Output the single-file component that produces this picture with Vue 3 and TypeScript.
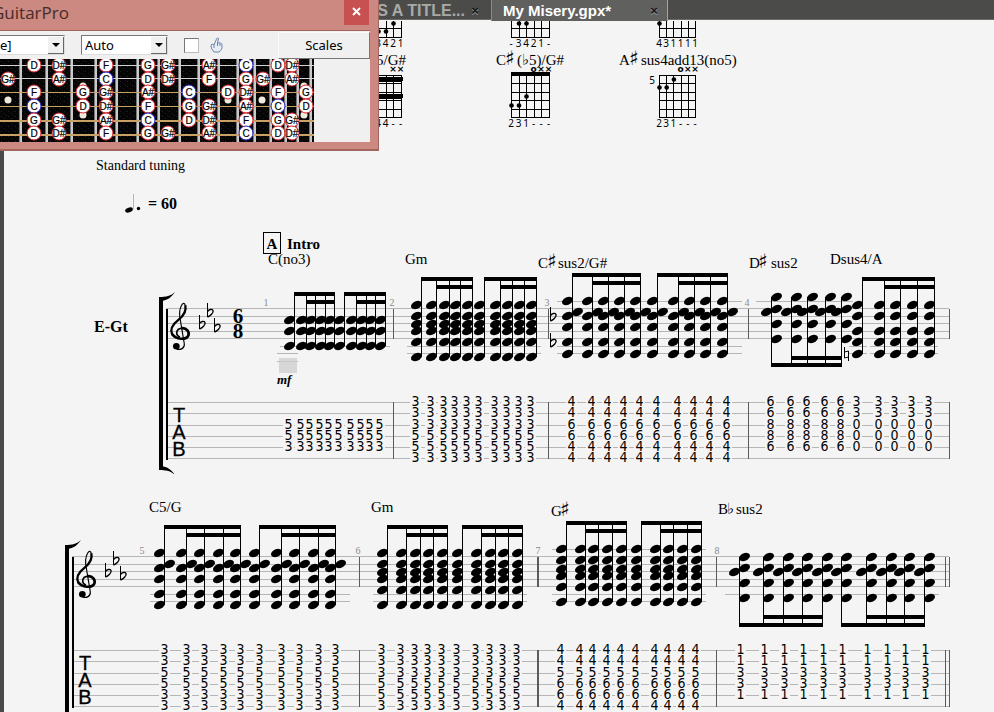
<script setup lang="ts">
import { ref } from 'vue'

type Head = [dx: number, y: number]

interface Run {
  stems: number[]
  down?: boolean
  beam: number
  beam2: number
  heads: Head[]
  frets: string
  fretDx: number
}

interface Ledger { y: number; from: number; to: number }
interface Label { x: number; y: number; root: string; sign?: string; restX?: number; rest?: string }
interface Accidental { x: number; y: number }

interface System {
  left: number
  first: boolean
  bars: { x: number; w: number }[]
  numbers: { x: number; n: number }[]
  labels: Label[]
  runs: Run[]
  ledgers: Ledger[]
  flats: Accidental[]
  naturals: Accidental[]
}

const staffYs = [308, 316, 323, 331, 338]
const tabYs = [402, 413, 425, 436, 447, 458]

const up = (ys: number[], shifted?: number): Head[] => {
  const heads = ys.map((y): Head => [-5, y])
  if (shifted !== undefined) heads.push([5, shifted])
  return heads
}
const down = (ys: number[], shifted: number): Head[] => [
  ...ys.map((y): Head => [5, y]),
  [-5, shifted],
]

function pair(
  first: number[], second: number[], beam: number, beam2: number,
  heads: Head[], frets: string, fretDx: number, isDown = false,
): Run[] {
  return [first, second].map(stems => ({ stems, beam, beam2, heads, frets, fretDx, down: isDown }))
}

const systems: System[] = [
  {
    left: 166,
    first: true,
    bars: [{ x: 393, w: 1 }, { x: 548, w: 1 }, { x: 748, w: 1 }, { x: 949, w: 1 }],
    numbers: [{ x: 266, n: 1 }, { x: 392, n: 2 }, { x: 547, n: 3 }, { x: 747, n: 4 }],
    labels: [
      { x: 268, y: 264, root: 'C(no3)' },
      { x: 405, y: 264, root: 'Gm' },
      { x: 538, y: 268, root: 'C', sign: '♯', restX: 558, rest: 'sus2/G#' },
      { x: 749, y: 268, root: 'D', sign: '♯', restX: 771, rest: 'sus2' },
      { x: 830, y: 264, root: 'Dsus4/A' },
    ],
    runs: [
      ...pair([294, 306, 315, 325, 334], [344, 356, 366, 375, 385], 292, 300,
        up([320, 331, 346]), '--553-', -6),
      ...pair([421, 436, 449, 460, 472], [484, 500, 512, 524, 536], 277, 285,
        up([305, 316, 324, 331, 342, 357]), '333553', -6),
      ...pair([572, 592, 608, 624, 640], [657, 678, 694, 710, 727], 273, 281,
        up([301, 316, 327, 342, 354], 312), '446644', -1),
      {
        stems: [771, 791, 807, 825, 841], down: true, beam: 363, beam2: 356,
        heads: down([297, 309, 324, 339], 312), frets: '66886-', fretDx: -1,
      },
      {
        stems: [862, 884, 900, 917, 934], beam: 277, beam2: 285,
        heads: up([305, 316, 331, 342, 354]), frets: '33000-', fretDx: -6,
      },
    ],
    ledgers: [
      { y: 346, from: 280, to: 390 },
      { y: 353, from: 277, to: 298 },
      { y: 361, from: 277, to: 298 },
      { y: 346, from: 407, to: 541 },
      { y: 353, from: 407, to: 541 },
      { y: 301, from: 557, to: 742 },
      { y: 346, from: 557, to: 742 },
      { y: 353, from: 557, to: 742 },
      { y: 301, from: 756, to: 853 },
      { y: 346, from: 849, to: 867 },
      { y: 353, from: 849, to: 867 },
      { y: 346, from: 870, to: 938 },
      { y: 353, from: 870, to: 938 },
    ],
    flats: [{ x: 550, y: 317 }, { x: 550, y: 343 }],
    naturals: [{ x: 847, y: 354 }],
  },
  {
    left: 72,
    first: false,
    bars: [{ x: 359, w: 1 }, { x: 537, w: 2 }, { x: 716, w: 1 }, { x: 945, w: 1 }, { x: 949, w: 1 }],
    numbers: [{ x: 142, n: 5 }, { x: 358, n: 6 }, { x: 538, n: 7 }, { x: 717, n: 8 }],
    labels: [
      { x: 149, y: 264, root: 'C5/G' },
      { x: 371, y: 264, root: 'Gm' },
      { x: 551, y: 268, root: 'G', sign: '♯' },
      { x: 718, y: 266, root: 'B', sign: '♭', restX: 736, rest: 'sus2' },
    ],
    runs: [
      ...pair([164, 186, 204, 223, 240], [259, 281, 299, 318, 335], 277, 285,
        up([305, 320, 331, 346, 357], 316), '335533', 0),
      ...pair([387, 406, 420, 433, 447], [462, 481, 495, 508, 522], 277, 285,
        up([305, 316, 324, 331, 342, 357]), '333553', -6),
      ...pair([566, 585, 598, 612, 626], [641, 660, 673, 687, 701], 273, 281,
        up([301, 312, 321, 328, 339, 354]), '445664', -6),
      ...pair([739, 763, 783, 802, 822], [841, 866, 886, 904, 924], 375, 367,
        down([309, 320, 335, 350], 324), '11331-', 1, true),
    ],
    ledgers: [
      { y: 346, from: 150, to: 350 },
      { y: 353, from: 150, to: 350 },
      { y: 346, from: 373, to: 527 },
      { y: 353, from: 373, to: 527 },
      { y: 301, from: 552, to: 706 },
      { y: 346, from: 552, to: 706 },
      { y: 353, from: 552, to: 706 },
      { y: 346, from: 725, to: 939 },
    ],
    flats: [],
    naturals: [],
  },
]

const keyFlats: Accidental[] = [{ x: 41, y: 313 }, { x: 33, y: 325 }, { x: 48, y: 328 }]

const stemTop = (r: Run) => (r.down ? Math.min(...r.heads.map(h => h[1])) : r.beam)
const stemEnd = (r: Run) => (r.down ? r.beam + 2 : Math.max(...r.heads.map(h => h[1])))

const fretCells = (r: Run) =>
  r.stems.flatMap(x =>
    r.frets.split('').map((f, row) => ({ x: x + r.fretDx, y: tabYs[row] ?? 0, f })).filter(c => c.f !== '-'))

interface Diagram {
  x: number
  step: number
  top: number
  rows: number
  nut?: boolean
  fingers: string
  marks?: string
  dots: [number, number][]
  barres?: number[]
  fret?: string
}

const diagrams: Diagram[] = [
  { x: 363, step: 7.5, top: 20, rows: 2, fingers: '  3421', dots: [[3, 31], [4, 23], [2, 31]] },
  { x: 511, step: 7.5, top: 20, rows: 2, fingers: '-3421-', dots: [[1, 23], [2, 23]] },
  { x: 659, step: 7.2, top: 20, rows: 2, fingers: '431111', dots: [[0, 23]] },
  { x: 363, step: 7.5, top: 75, rows: 5, fingers: '  44--', marks: '    ××', dots: [], barres: [79, 96] },
  { x: 511, step: 7.5, top: 75, rows: 5, nut: true, fingers: '231---', marks: '   o××', dots: [[0, 105], [1, 105], [2, 96]] },
  { x: 659, step: 7.2, top: 75, rows: 5, fingers: '231---', marks: '   o××', dots: [[2, 79], [0, 87], [1, 87]], fret: '5' },
]

const strings = [0, 1, 2, 3, 4, 5]
const rowY = (d: Diagram, i: number) => Math.round(d.top + i * 8.4)
const cells = (s: string) => s.split('').map((c, i) => ({ c, i })).filter(o => o.c !== ' ')

const fretXs = [20, 46, 71, 95, 116, 137, 158, 179, 198, 218, 237, 254, 270, 285, 297, 310]
const stringYs = [65, 78, 92, 106, 120, 134]
const noteYs = [65, 79, 92, 106, 120, 133]
const inlays: [number, number][] = [[8, 100], [83, 86], [83, 115], [228, 100], [262, 100], [304, 86], [304, 115]]
const columns: [number, string[]][] = [
  [8, ['', 'G#', '', '', '', '']],
  [34, ['D', '', 'F', 'C', 'G', 'D']],
  [59, ['D#', 'A#', '', '', 'G#', 'D#']],
  [83, ['', '', 'G', 'D', '', '']],
  [106, ['F', 'C', 'G#', 'D#', 'A#', 'F']],
  [148, ['G', 'D', 'A#', 'F', 'C', 'G']],
  [168, ['G#', 'D#', '', '', '', 'G#']],
  [189, ['', '', 'C', 'G', 'D', '']],
  [209, ['A#', 'F', '', 'G#', 'D#', 'A#']],
  [228, ['', '', 'D', '', '', '']],
  [246, ['C', 'G', 'D#', 'A#', 'F', 'C']],
  [263, ['', 'G#', '', '', '', '']],
  [278, ['D', '', 'F', 'C', 'G', 'D']],
  [292, ['D#', 'A#', '', '', 'G#', 'D#']],
  [306, ['', '', 'G', 'D', '', '']],
]
const boardNotes = columns.flatMap(([x, names]) =>
  names.map((name, row) => ({ x, y: noteYs[row] ?? 0, name })).filter(n => n.name))

const scale = ref('e]')
const mode = ref('Auto')
const follow = ref(false)
</script>

<template>
  <div class="app">
    <nav class="tabs">
      <div class="tab">
        <a href="#title" class="tab-name">S A TITLE...</a>
        <button class="tab-close" aria-label="Close tab">×</button>
      </div>
      <div class="tab active">
        <a href="#misery" class="tab-name">My Misery.gpx*</a>
        <button class="tab-close" aria-label="Close tab">×</button>
      </div>
    </nav>

    <main class="sheet">
      <svg class="strip" width="990" height="132" viewBox="4 21 990 132">
        <g v-for="(d, di) in diagrams" :key="di">
          <rect v-for="s in strings" :key="s" class="ink" :x="Math.round(d.x + s * d.step)" :y="d.top" width="1" :height="rowY(d, d.rows) - d.top" />
          <rect v-for="r in d.rows + 1" :key="r" class="ink" :x="d.x" :y="rowY(d, r - 1)" :width="Math.round(d.step * 5) + 1" height="1" />
          <rect v-if="d.nut" class="ink" :x="d.x" y="72" :width="Math.round(d.step * 5) + 1" height="4" />
          <rect v-for="b in d.barres ?? []" :key="b" class="ink" :x="d.x" :y="b - 2" width="40" height="5" rx="2" />
          <circle v-for="(p, i) in d.dots" :key="i" :cx="d.x + p[0] * d.step + 0.5" :cy="p[1] + 0.5" r="2.3" />
          <text v-for="o in cells(d.fingers)" :key="'f' + o.i" class="finger" :x="d.x + o.i * d.step" :y="rowY(d, d.rows) + 10">{{ o.c }}</text>
          <text v-for="o in cells(d.marks ?? '')" :key="'m' + o.i" class="mark" :x="d.x + o.i * d.step" y="72">{{ o.c }}</text>
          <text v-if="d.fret" class="finger" x="652" y="84">{{ d.fret }}</text>
        </g>
        <text class="chord" x="376" y="65">5/G#</text>
        <text class="chord" x="496" y="65">C</text>
        <text class="sign sharp" x="505" y="65">♯</text>
        <text class="chord" x="517" y="65">(<tspan class="sign">♭</tspan>5)/G#</text>
        <text class="chord" x="619" y="65">A</text>
        <text class="sign sharp" x="629" y="65">♯</text>
        <text class="chord" x="641" y="65">sus4add13(no5)</text>
      </svg>

      <div class="meta">
        <div class="tuning">Standard tuning</div>
        <div class="tempo">
          <svg width="18" height="22" viewBox="0 0 18 22">
            <rect x="8" y="1" width="1" height="15" fill="#b5b5b5" />
            <ellipse cx="4" cy="17" rx="4" ry="2.400" transform="rotate(-18 4 17)" />
            <circle cx="13.500" cy="15.500" r="1.700" />
          </svg>
          <span>= 60</span>
        </div>
      </div>

      <svg v-for="(s, si) in systems" :key="si" class="system" width="990" height="248" viewBox="4 226 990 248">
        <rect v-for="y in staffYs" :key="'s' + y" class="line" :x="s.left" :y="y" :width="949 - s.left" height="1" />
        <rect v-for="y in tabYs" :key="'t' + y" class="line" :x="s.left" :y="y" :width="949 - s.left" height="1" />
        <rect v-for="(l, i) in s.ledgers" :key="'l' + i" class="line" :x="l.from" :y="l.y" :width="l.to - l.from" height="1" />
        <g v-for="b in s.bars" :key="'b' + b.x" class="bar">
          <rect :x="b.x" y="309" :width="b.w" height="30" />
          <rect :x="b.x" y="402" :width="b.w" height="57" />
        </g>

        <g :transform="`translate(${s.left} 0)`">
          <rect class="ink" x="-7" y="297" width="4" height="173" />
          <path d="M-7 297 C0 297 5 296 9 292 C5 298 1 300 -4 301 Z M-7 470 C0 470 5 471 9 475 C5 469 1 467 -4 466 Z" />
          <rect class="ink" x="0" y="309" width="2" height="151" />
          <g class="clef" transform="translate(4 302) scale(0.333)">
            <path d="M30 105 C15 100 18 80 34 79" stroke-width="5" />
            <path d="M33 79 C51 76 59 91 55 101 C49 114 18 114 7 97" stroke-width="8" />
            <path d="M7 99 C-2 82 8 67 26 53 C40 42 50 28 46 10" stroke-width="7" />
            <path d="M46 11 C44 1 38 3 34 11 C27 24 27 34 31 54 L43 126 C44 140 32 144 20 142" stroke-width="3.500" />
            <circle cx="19" cy="133" r="10" />
          </g>
          <g v-for="a in keyFlats" :key="a.x" class="accidental" :transform="`translate(${a.x} ${a.y})`">
            <path d="M0.500 -10 V4" />
            <path d="M0.500 4 C3 3 7 0 6 -2.500 C5 -4.500 2 -3.500 0.500 -1.500" stroke-width="1.400" />
          </g>
          <text class="tab-letter" x="13" y="422">T</text>
          <text class="tab-letter" x="13" y="439">A</text>
          <text class="tab-letter" x="13" y="456">B</text>
        </g>

        <g v-if="s.first">
          <text class="part" x="94" y="332">E-Gt</text>
          <text class="meter" x="238" y="323">6</text>
          <text class="meter" x="238" y="338">8</text>
          <rect class="section" x="263.500" y="232.500" width="17" height="21" />
          <text class="heading middle" x="272" y="249">A</text>
          <text class="heading" x="287" y="249">Intro</text>
          <rect class="cursor" x="279" y="358" width="18" height="15" />
          <text class="dynamic" x="277" y="384">mf</text>
        </g>

        <text v-for="m in s.numbers" :key="'n' + m.n" class="number" :x="m.x" y="306">{{ m.n }}</text>

        <g v-for="(l, i) in s.labels" :key="'c' + i">
          <text class="chord" :x="l.x" :y="l.y">{{ l.root }}</text>
          <text v-if="l.sign" :class="['sign', { sharp: l.sign === '♯' }]" :x="l.x + 9" :y="l.y">{{ l.sign }}</text>
          <text v-if="l.rest" class="chord" :x="l.restX" :y="l.y">{{ l.rest }}</text>
        </g>

        <g v-for="(r, ri) in s.runs" :key="'r' + ri">
          <rect class="ink" :x="r.stems[0]" :y="r.beam" :width="r.stems[4] - r.stems[0] + 1" height="4" />
          <rect class="ink" :x="r.stems[1]" :y="r.beam2" :width="r.stems[4] - r.stems[1] + 1" height="4" />
          <g v-for="x in r.stems" :key="x">
            <rect class="ink" :x="x" :y="stemTop(r)" width="1" :height="stemEnd(r) - stemTop(r)" />
            <ellipse
              v-for="(h, hi) in r.heads" :key="hi" rx="5.800" ry="3.700"
              :transform="`translate(${x + h[0] + 0.5} ${h[1]}) rotate(-24)`"
            />
          </g>
          <g v-for="(c, ci) in fretCells(r)" :key="'d' + ci">
            <rect class="gap" :x="c.x - 5" :y="c.y - 1" width="11" height="3" />
            <text class="digit" :x="c.x + 0.5" :y="c.y + 4">{{ c.f }}</text>
          </g>
        </g>

        <g v-for="(a, i) in s.flats" :key="'f' + i" class="accidental" :transform="`translate(${a.x} ${a.y})`">
          <path d="M0.500 -10 V4" />
          <path d="M0.500 4 C3 3 7 0 6 -2.500 C5 -4.500 2 -3.500 0.500 -1.500" stroke-width="1.400" />
        </g>
        <g v-for="(a, i) in s.naturals" :key="'a' + i" class="accidental" :transform="`translate(${a.x} ${a.y})`">
          <path d="M-2.500 -7 V4 L1.500 3 M1.500 7 V-3 L-2.500 -2" />
        </g>
      </svg>
    </main>

    <section class="window">
      <header class="titlebar">
        <h1 class="window-title">GuitarPro</h1>
        <button class="window-close" aria-label="Close">
          <svg width="10" height="10" viewBox="0 0 10 10"><path d="M1 1 L8 8 M8 1 L1 8" /></svg>
        </button>
      </header>
      <div class="client">
        <div class="toolbar">
          <div class="combo root">
            <select v-model="scale" aria-label="Scale"><option>e]</option></select>
            <span class="arrow"></span>
          </div>
          <div class="combo mode">
            <select v-model="mode" aria-label="Mode"><option>Auto</option></select>
            <span class="arrow"></span>
          </div>
          <input v-model="follow" class="check" type="checkbox" aria-label="Follow">
          <svg class="hand" width="13" height="16" viewBox="0 0 13 16">
            <path d="M4 8 L6.500 2 Q7.500 0 8.500 1.500 L7.500 6 L10.500 6 Q12 6.500 12 8 V11 Q11 14 9 15 H4 Q1 12 1 9 Q1 7 3 7 Z M7.500 6 V9 M10 6.500 V9 M4 8 V11" />
          </svg>
          <button class="scales">Scales</button>
        </div>
        <svg class="board" width="314" height="83" viewBox="0 59 314 83">
          <defs>
            <pattern id="grain" width="7" height="5" patternUnits="userSpaceOnUse">
              <rect width="7" height="5" fill="#050505" />
              <rect x="1" y="1" width="1" height="1" fill="#232323" />
              <rect x="4" y="3" width="1" height="1" fill="#1d1d1d" />
              <rect x="6" y="0" width="1" height="1" fill="#191919" />
            </pattern>
          </defs>
          <rect x="0" y="59" width="314" height="83" fill="url(#grain)" />
          <g v-for="x in fretXs" :key="x">
            <rect :x="x - 1" y="59" width="1" height="83" fill="#777" />
            <rect :x="x" y="59" width="2" height="83" fill="#c9c9c9" />
          </g>
          <rect v-for="(y, i) in stringYs" :key="y" x="0" :y="y" width="314" :height="i > 3 ? 2 : 1" :fill="i < 2 ? '#d4d4d4' : '#c8a264'" />
          <circle v-for="(p, i) in inlays" :key="i" :cx="p[0]" :cy="p[1]" r="3.500" fill="#efeadd" />
          <g v-for="(n, i) in boardNotes" :key="'n' + i">
            <circle :class="['fret-note', { tonic: n.name === 'C' }]" :cx="n.x" :cy="n.y" r="7" />
            <text class="fret-name" :x="n.x" :y="n.y + 4">{{ n.name }}</text>
          </g>
        </svg>
      </div>
    </section>
  </div>
</template>

<style>
body {
  margin: 0;
  background: #f4f4f4;
}
</style>

<style scoped>
.app {
  position: relative;
  display: flex;
  flex-direction: column;
  height: 100vh;
  overflow: hidden;
  background: #f4f4f4;
  font-family: "Liberation Sans", Arial, sans-serif;
}

.tabs {
  display: flex;
  flex: none;
  height: 21px;
  background: linear-gradient(#4b4c4a 19px, #6b6c6a 19px, #6b6c6a 20px, #f4f4f4 20px);
}

.tab {
  box-sizing: border-box;
  display: flex;
  align-items: center;
  justify-content: space-between;
  width: 177px;
  padding: 0 7px 0 11px;
}

.tab:first-child {
  width: 491px;
  justify-content: flex-end;
  gap: 4px;
  padding-right: 10px;
}

.tab.active {
  border-left: 1px solid #8b8c8a;
  border-right: 1px solid #a5a6a4;
  background: #60615f;
}

.tab-name {
  color: #a9aaa8;
  font-size: 16px;
  font-weight: bold;
  line-height: 20px;
  text-decoration: none;
}

.active .tab-name {
  color: #fff;
  font-size: 15px;
}

.tab-close {
  width: 12px;
  padding: 0;
  border: 0;
  background: none;
  color: #161616;
  font: bold 13px/18px "Liberation Sans", Arial, sans-serif;
  text-shadow: 0 1px 0 #a0a0a0;
}

.sheet {
  flex: 1;
  min-height: 0;
  overflow: hidden;
  border-left: 4px solid #4a4947;
}

.strip,
.system {
  display: block;
}

.meta {
  box-sizing: border-box;
  height: 73px;
  padding: 4px 0 0 92px;
  font-family: "Liberation Serif", "Times New Roman", serif;
}

.tuning {
  font-size: 14px;
  line-height: 18px;
}

.tempo {
  display: flex;
  align-items: center;
  gap: 5px;
  padding: 18px 0 0 29px;
  font-size: 16px;
  font-weight: bold;
  line-height: 22px;
}

.ink,
.line,
.bar rect {
  shape-rendering: crispEdges;
}

.line { fill: #b6b6b6; }
.bar rect { fill: #5a5a5a; }
.gap { fill: #f4f4f4; }
.cursor { fill: #cfcfcf; fill-opacity: 0.8; }

.section {
  fill: none;
  stroke: #000;
}

.clef path,
.accidental path {
  fill: none;
  stroke: #000;
}

.chord,
.heading,
.part,
.meter,
.dynamic,
.number {
  font-family: "Liberation Serif", "Times New Roman", serif;
  font-size: 15px;
}

.sign {
  font-family: "DejaVu Sans", sans-serif;
  font-size: 15px;
}

.sign.sharp {
  font-size: 20px;
}

.heading { font-weight: bold; }

.middle,
.meter,
.number,
.finger,
.mark,
.digit,
.tab-letter,
.fret-name {
  text-anchor: middle;
}

.part {
  font-size: 16px;
  font-weight: bold;
}

.meter {
  font-size: 21px;
  font-weight: bold;
}

.dynamic {
  font-size: 13px;
  font-style: italic;
  font-weight: bold;
}

.number {
  font-size: 10px;
  fill: #8a8a8a;
}

.finger {
  font-family: "Noto Sans", sans-serif;
  font-size: 10px;
}

.mark {
  font-family: "DejaVu Sans", sans-serif;
  font-size: 9px;
  font-weight: bold;
}

.digit {
  font-family: "Liberation Sans Narrow", "DejaVu Sans Condensed", "Noto Sans", sans-serif;
  font-size: 14px;
}

.tab-letter {
  font-size: 20px;
  stroke: #000;
  stroke-width: 0.3px;
}

.window {
  position: absolute;
  top: 0;
  left: 0;
  box-sizing: border-box;
  width: 379px;
  height: 151px;
  padding-right: 8px;
  border-right: 1px solid #a4645e;
  border-bottom: 2px solid #a4645e;
  background: #cb8981;
}

.titlebar {
  display: flex;
  align-items: flex-start;
  justify-content: space-between;
  height: 30px;
}

.window-title {
  margin: 0 0 0 -8px;
  color: #472b28;
  font: 17px/25px "Open Sans", sans-serif;
}

.window-close {
  width: 25px;
  height: 25px;
  margin-right: 1px;
  padding: 0;
  border: 0;
  background: #c75050;
}

.window-close path {
  stroke: #fff;
  stroke-width: 2;
}

.client {
  border-top: 1px solid #a4645e;
  background: #f0f0f0;
}

.toolbar {
  display: flex;
  align-items: center;
  height: 28px;
}

.combo {
  position: relative;
  box-sizing: border-box;
  height: 20px;
  border: 1px solid;
  border-color: #777 #ddd #ddd #777;
  background: #fff;
}

.combo.root {
  width: 65px;
  border-left: 0;
}

.combo.mode {
  width: 87px;
  margin-left: 16px;
}

.combo select {
  width: 100%;
  height: 18px;
  padding: 0 3px;
  border: 0;
  appearance: none;
  background: none;
  color: #000;
  font: 13px/18px "Noto Sans", sans-serif;
}

.combo.root select {
  padding-left: 0;
}

.arrow {
  position: absolute;
  top: 1px;
  right: 0;
  box-sizing: border-box;
  width: 16px;
  height: 17px;
  border-right: 1px solid #666;
  border-bottom: 1px solid #666;
  background: #f0f0f0;
  pointer-events: none;
}

.arrow::after {
  position: absolute;
  top: 6px;
  left: 4px;
  border: 4px solid transparent;
  border-top-color: #000;
  border-bottom: 0;
  content: "";
}

.check {
  width: 15px;
  height: 15px;
  margin: 0 0 0 16px;
  border: 1px solid;
  border-color: #777 #bbb #bbb #777;
  appearance: none;
  background: #fff;
}

.hand {
  margin-left: 11px;
}

.hand path {
  fill: #e8eef6;
  stroke: #6b87b0;
}

.scales {
  width: 92px;
  height: 27px;
  margin-left: auto;
  padding: 0;
  border: 1px solid;
  border-color: #fafafa #777 #777 #fafafa;
  background: #f0f0f0;
  color: #000;
  font: 13px/24px "Noto Sans", sans-serif;
}

.board {
  display: block;
}

.fret-note {
  fill: #fff;
  stroke: #d8222a;
  stroke-width: 1px;
}

.fret-note.tonic {
  stroke: #2222c8;
}

.fret-name {
  font-size: 10px;
  stroke: #000;
  stroke-width: 0.2px;
}
</style>
